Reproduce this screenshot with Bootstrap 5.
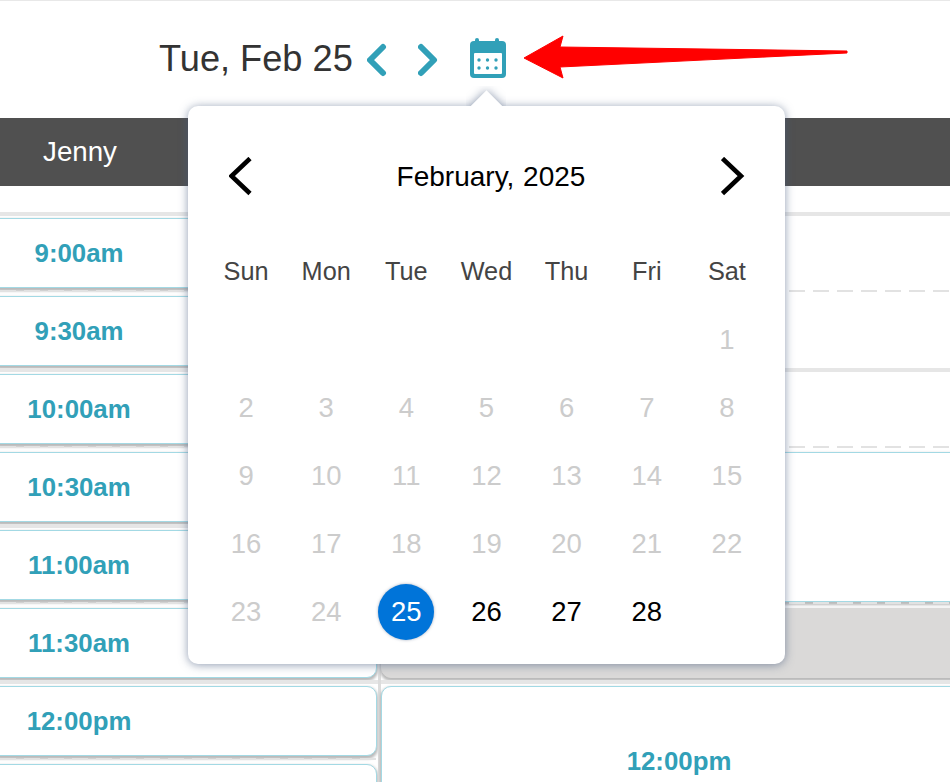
<!DOCTYPE html>
<html lang="en">
<head>
    <meta charset="UTF-8">
    <meta name="viewport" content="width=device-width, initial-scale=1.0">
    <title>Schedule</title>
    <link rel="stylesheet" href="https://cdn.jsdelivr.net/npm/bootstrap@5.3.0/dist/css/bootstrap.min.css">
    <style>
        body {
            font-family: "Liberation Sans", Arial, sans-serif;
            background-color: #fff;
            overflow: hidden;
        }
        .page-wrap {
            position: relative;
            width: 950px;
            height: 782px;
            overflow: hidden;
        }
        .date-bar {
            height: 118px;
            padding-left: 159px;
            border-top: 1px solid #e8e8e8;
        }
        .date-title {
            font-size: 36.2px;
            color: #333;
            width: 208px;
        }
        .staff-bar {
            height: 68px;
            margin-bottom: 26px;
            background-color: #505050;
            color: #fff;
            font-size: 27.7px;
        }
        .time-col {
            width: 160px;
            text-align: center;
        }
        .left-col {
            width: 378px;
        }
        .col-gap {
            width: 3px;
            background-color: #dcdcdc;
        }
        .right-col {
            width: 569px;
        }
        .line-row {
            height: 78px;
            flex-shrink: 0;
        }
        .line-row.row-hour {
            border-top: 4px solid #e6e6e6;
            padding-top: 2px;
        }
        .line-row.row-half {
            padding-top: 6px;
            background: repeating-linear-gradient(90deg, #e2e2e2 0, #e2e2e2 16px, transparent 16px, transparent 24px) top left / 100% 2px no-repeat;
        }
        .line-row.row-tall {
            height: 156px;
        }
        .slot-box {
            height: 70px;
            border: 1px solid #a3d9e4;
            border-radius: 10px;
            background-color: #fff;
            box-shadow: 0 2px 3px 1px #b9b9b9;
            color: #31a0b8;
            font-size: 25.8px;
            font-weight: 700;
        }
        .left-col .slot-box {
            margin-left: -10px;
            padding-left: 8px;
            margin-right: 1px;
        }
        .right-col .slot-box {
            margin-right: -20px;
        }
        .slot-tall {
            height: 150px;
        }
        .slot-gray {
            background-color: #dad9d8;
            border-color: #dad9d8;
        }
        .slot-label {
            margin-left: 217px;
        }
        .cal-pop {
            position: absolute;
            left: 188px;
            top: 106px;
            width: 597px;
            height: 558px;
            padding: 41px 18px 18px;
            background-color: #fff;
            border-radius: 10px;
            box-shadow: 0 1px 10px rgba(70, 90, 125, .6);
        }
        .cal-notch {
            position: absolute;
            left: 278px;
            top: -20px;
            width: 40px;
            height: 20px;
            overflow: hidden;
        }
        .cal-notch::after {
            content: "";
            position: absolute;
            left: 8.5px;
            top: 8.5px;
            width: 23px;
            height: 23px;
            background-color: #fff;
            transform: rotate(45deg);
            box-shadow: 0 0 10px rgba(70, 90, 125, .6);
        }
        .cal-head {
            height: 60px;
            margin-bottom: 31px;
            padding: 0 22px 0 23px;
        }
        .cal-month {
            font-size: 28px;
            color: #000;
            padding-left: 8px;
            word-spacing: 1px;
        }
        .cal-week {
            height: 68px;
            font-size: 25.3px;
            color: #444;
        }
        .cal-days {
            height: 68px;
            font-size: 27.5px;
            color: #000;
        }
        .day-off {
            color: #ccc;
        }
        .day-now {
            width: 56px;
            height: 56px;
            border-radius: 50%;
            background-color: #0074d9;
            color: #fff;
            box-shadow: 0 0 3px rgba(70, 90, 125, .5);
        }
        .red-arrow {
            position: absolute;
            left: 520px;
            top: 30px;
        }
        .nav-step {
            margin-left: 31px;
        }
        .cal-btn {
            margin-left: 28px;
            margin-top: -2px;
        }
    </style>
</head>
<body>

<div class="page-wrap">
    <div class="date-bar d-flex align-items-center">
        <div class="date-title">Tue, Feb 25</div>
        <svg width="20" height="36" viewBox="0 0 20 36" fill="none" stroke="#31a0b8" stroke-width="6" stroke-linecap="round" stroke-linejoin="round"><path d="M16 5 L3 18 L16 31"/></svg>
        <svg class="nav-step" width="24" height="36" viewBox="0 0 24 36" fill="none" stroke="#31a0b8" stroke-width="6" stroke-linecap="round" stroke-linejoin="round"><path d="M3 5 L16 18 L3 31"/></svg>
        <svg class="cal-btn" width="36" height="42" viewBox="0 0 36 42">
            <rect x="5" y="0" width="4" height="8" rx="2" fill="#31a0b8"/>
            <rect x="25" y="0" width="4" height="8" rx="2" fill="#31a0b8"/>
            <rect x="0" y="3" width="36" height="37" rx="4" fill="#31a0b8"/>
            <rect x="4" y="15" width="28" height="21" rx="1" fill="#fff"/>
            <g fill="#31a0b8">
                <circle cx="9" cy="22" r="1.7"/><circle cx="17.5" cy="22" r="1.7"/><circle cx="26" cy="22" r="1.7"/>
                <circle cx="9" cy="30" r="1.7"/><circle cx="17.5" cy="30" r="1.7"/><circle cx="26" cy="30" r="1.7"/>
            </g>
        </svg>
    </div>

    <div class="staff-bar d-flex align-items-center">
        <div class="time-col">Jenny</div>
    </div>

    <div class="d-flex">
        <div class="left-col">
            <div class="line-row row-hour"><div class="slot-box d-flex align-items-center"><div class="time-col">9:00am</div></div></div>
            <div class="line-row row-half"><div class="slot-box d-flex align-items-center"><div class="time-col">9:30am</div></div></div>
            <div class="line-row row-hour"><div class="slot-box d-flex align-items-center"><div class="time-col">10:00am</div></div></div>
            <div class="line-row row-half"><div class="slot-box d-flex align-items-center"><div class="time-col">10:30am</div></div></div>
            <div class="line-row row-hour"><div class="slot-box d-flex align-items-center"><div class="time-col">11:00am</div></div></div>
            <div class="line-row row-half"><div class="slot-box d-flex align-items-center"><div class="time-col">11:30am</div></div></div>
            <div class="line-row row-hour"><div class="slot-box d-flex align-items-center"><div class="time-col">12:00pm</div></div></div>
            <div class="line-row row-half"><div class="slot-box"></div></div>
        </div>
        <div class="col-gap"></div>
        <div class="right-col">
            <div class="line-row row-hour"></div>
            <div class="line-row row-half"></div>
            <div class="line-row row-hour"></div>
            <div class="line-row row-half row-tall"><div class="slot-box slot-tall"></div></div>
            <div class="line-row row-half"><div class="slot-box slot-gray"></div></div>
            <div class="line-row row-hour row-tall"><div class="slot-box slot-tall d-flex align-items-center"><div class="time-col slot-label">12:00pm</div></div></div>
        </div>
    </div>

    <div class="cal-pop">
        <div class="cal-notch"></div>
        <div class="cal-head d-flex align-items-center justify-content-between">
            <svg width="24" height="40" viewBox="0 0 24 40" fill="none" stroke="#000" stroke-width="4.6"><path d="M21 1.5 L2.5 19 L21 36.5"/></svg>
            <div class="cal-month">February, 2025</div>
            <svg width="24" height="40" viewBox="0 0 24 40" fill="none" stroke="#000" stroke-width="4.6"><path d="M1.5 1.5 L20 19 L1.5 36.5"/></svg>
        </div>
        <div class="row g-0 cal-week align-items-center text-center">
            <div class="col">Sun</div><div class="col">Mon</div><div class="col">Tue</div><div class="col">Wed</div><div class="col">Thu</div><div class="col">Fri</div><div class="col">Sat</div>
        </div>
        <div class="row g-0 cal-days align-items-center text-center day-off">
            <div class="col"></div><div class="col"></div><div class="col"></div><div class="col"></div><div class="col"></div><div class="col"></div><div class="col">1</div>
        </div>
        <div class="row g-0 cal-days align-items-center text-center day-off">
            <div class="col">2</div><div class="col">3</div><div class="col">4</div><div class="col">5</div><div class="col">6</div><div class="col">7</div><div class="col">8</div>
        </div>
        <div class="row g-0 cal-days align-items-center text-center day-off">
            <div class="col">9</div><div class="col">10</div><div class="col">11</div><div class="col">12</div><div class="col">13</div><div class="col">14</div><div class="col">15</div>
        </div>
        <div class="row g-0 cal-days align-items-center text-center day-off">
            <div class="col">16</div><div class="col">17</div><div class="col">18</div><div class="col">19</div><div class="col">20</div><div class="col">21</div><div class="col">22</div>
        </div>
        <div class="row g-0 cal-days align-items-center text-center">
            <div class="col day-off">23</div><div class="col day-off">24</div>
            <div class="col d-flex justify-content-center"><div class="day-now d-flex align-items-center justify-content-center">25</div></div>
            <div class="col">26</div><div class="col">27</div><div class="col">28</div><div class="col"></div>
        </div>
    </div>

    <svg class="red-arrow" width="332" height="52" viewBox="0 0 332 52">
        <polygon points="4,28 43,6 40,17 327,21 327,23 40,37 43,48" fill="#f00" stroke="#f00" stroke-width="1" stroke-linejoin="round"/>
    </svg>
</div>

<script src="https://cdn.jsdelivr.net/npm/bootstrap@5.3.0/dist/js/bootstrap.bundle.min.js"></script>
</body>
</html>
